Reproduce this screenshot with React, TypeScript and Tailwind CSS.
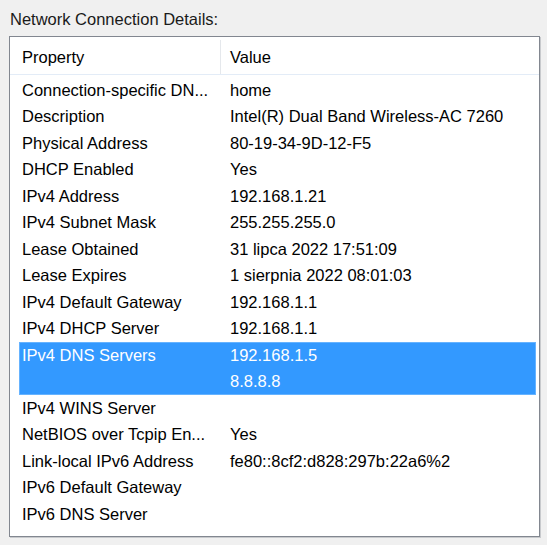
const ROWS: [string, string][] = [
  ['Connection-specific DN...', 'home'],
  ['Description', 'Intel(R) Dual Band Wireless-AC 7260'],
  ['Physical Address', '80-19-34-9D-12-F5'],
  ['DHCP Enabled', 'Yes'],
  ['IPv4 Address', '192.168.1.21'],
  ['IPv4 Subnet Mask', '255.255.255.0'],
  ['Lease Obtained', '31 lipca 2022 17:51:09'],
  ['Lease Expires', '1 sierpnia 2022 08:01:03'],
  ['IPv4 Default Gateway', '192.168.1.1'],
  ['IPv4 DHCP Server', '192.168.1.1'],
]

const ROWS_AFTER: [string, string][] = [
  ['IPv4 WINS Server', ''],
  ['NetBIOS over Tcpip En...', 'Yes'],
  ['Link-local IPv6 Address', 'fe80::8cf2:d828:297b:22a6%2'],
  ['IPv6 Default Gateway', ''],
  ['IPv6 DNS Server', ''],
]

function Row({ name, value }: { name: string; value: string }) {
  return (
    <div className="flex h-[26.5px] items-center">
      <div className="w-[208px] whitespace-nowrap pl-[3px]">{name}</div>
      <div className="pl-[3px]">{value}</div>
    </div>
  )
}

export default function App() {
  return (
    <div
      className="h-[545px] w-[547px] bg-[#f0f0f0] text-[16.5px] text-black"
      style={{ fontFamily: '"Liberation Sans", Arial, sans-serif' }}
    >
      <div className="pl-[10px] pt-[8px] leading-[22px] text-[#1a1a1a]">Network Connection Details:</div>
      <div className="ml-[9px] mt-[6px] h-[501px] w-[531px] border border-[#828790] bg-white shadow-[1px_1px_0_#c8cacd]">
        <div className="flex h-[38px] items-center border-b border-[#e3ecf7] pr-[8px] pt-[3px]">
          <div className="flex h-full w-[211px] items-center border-r border-[#e5e8ec] pl-[12px]">Property</div>
          <div className="pl-[9px]">Value</div>
        </div>
        <div className="pl-[9px] pr-[3px] pt-[2px]">
          {ROWS.map(([n, v]) => (
            <Row key={n} name={n} value={v} />
          ))}
          <div className="border border-[#66b3ff] bg-[#3399ff] text-white">
            <div className="flex h-[25.5px] items-center">
              <div className="w-[207px] pl-[2px]">IPv4 DNS Servers</div>
              <div className="pl-[3px]">192.168.1.5</div>
            </div>
            <div className="flex h-[25.5px] items-center">
              <div className="w-[207px] pl-[2px]" />
              <div className="pl-[3px]">8.8.8.8</div>
            </div>
          </div>
          {ROWS_AFTER.map(([n, v]) => (
            <Row key={n} name={n} value={v} />
          ))}
        </div>
      </div>
    </div>
  )
}
